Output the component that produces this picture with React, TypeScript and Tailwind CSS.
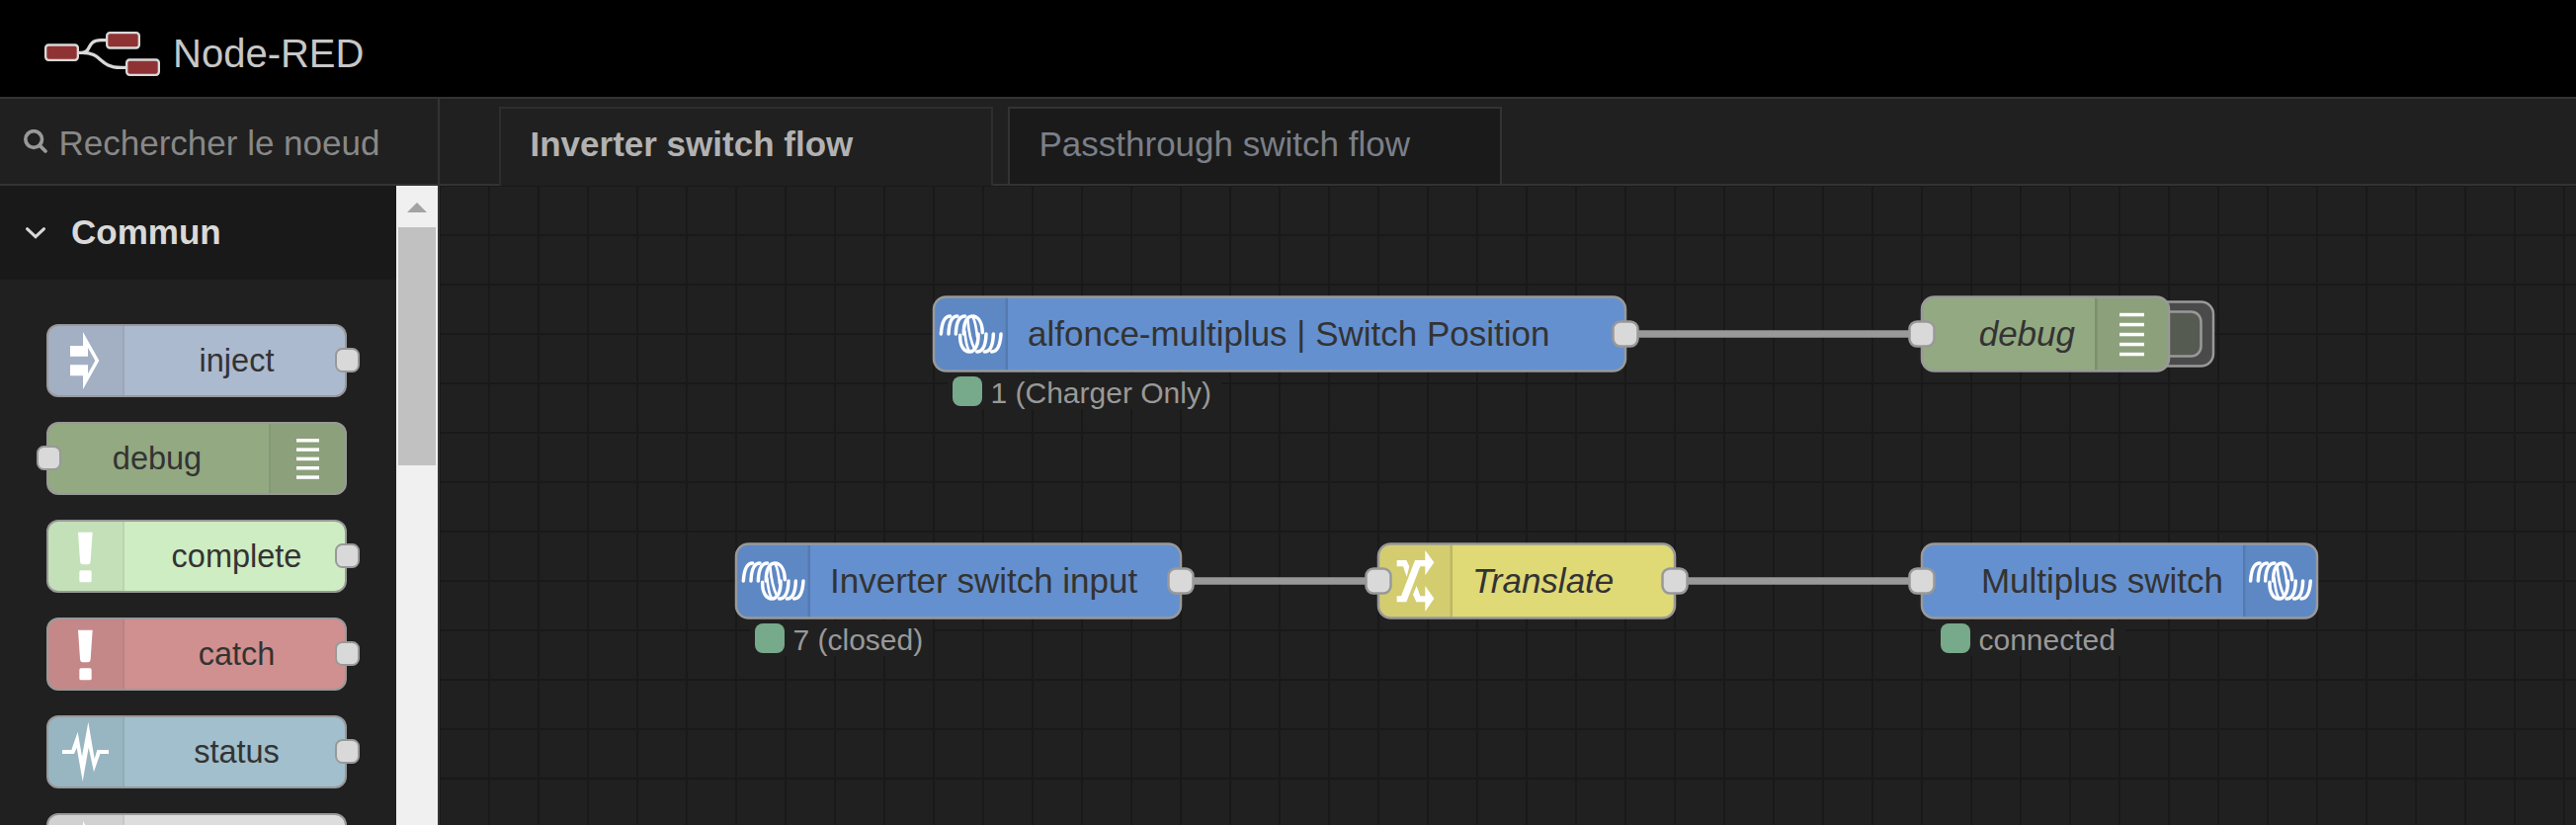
import React from "react";

const NODE_STROKE = "#999999";

/* ---------- glyphs ---------- */

function Logo() {
  return (
    <svg className="h-[46px] w-[118px] shrink-0" viewBox="135 96 354 138" fill="none">
      <path d="M238 160 H250 C278 160 262 122 306 122 H324" stroke="#d9d9d9" strokeWidth="10" />
      <path d="M250 160 C312 160 300 205 366 205 H384" stroke="#d9d9d9" strokeWidth="10" />
      <g fill="#8f3233" stroke="#d9d9d9" strokeWidth="7">
        <rect x="138.500" y="136.500" width="98" height="46" rx="9" />
        <rect x="324.500" y="99.500" width="98" height="46" rx="9" />
        <rect x="384.500" y="181.500" width="98" height="46" rx="9" />
      </g>
    </svg>
  );
}

function SearchIcon() {
  return (
    <svg className="h-6 w-6 shrink-0" viewBox="0 0 72 72" fill="none" stroke="#999999">
      <circle cx="30.5" cy="30" r="25" strokeWidth="11" />
      <path d="M49 49 L66 66" strokeWidth="11" strokeLinecap="round" />
    </svg>
  );
}

function ChevronDown() {
  return (
    <svg className="h-3 w-5 shrink-0" viewBox="0 0 60 36" fill="none">
      <path d="M4.500 5 L30 29 L55.500 5" stroke="#d9d9d9" strokeWidth="9" strokeLinecap="round" />
    </svg>
  );
}

/* Palette glyphs share a 75x70 box, drawn in thirds of a pixel. */
function PaletteGlyph({ kind }: { kind: string }) {
  return (
    <svg className="h-[70px] w-[75px]" viewBox="0 0 225 210" fill="#fff">
      {kind === "inject" && (
        <path
          fillRule="evenodd"
          d="M66 60 H105 V18 L154 105 L105 192 V151 H66 V118 H105 H120 V145 L142 105 L120 66 V92 H66 Z"
        />
      )}
      {kind === "debug" && (
        <g>
          {[45, 73, 101, 129, 157].map((y) => (
            <rect key={y} x="78" y={y} width="69" height="10.500" />
          ))}
        </g>
      )}
      {kind === "alert" && (
        <g>
          <path d="M90 32 H134 L128 120 Q127 130 120 130 H104 Q97 130 96 120 Z" />
          <rect x="94" y="148" width="37" height="36" rx="5" />
        </g>
      )}
      {kind === "status" && (
        <path d="M42 99 H70 L89 44 L102 119 L121 14 L140 126 L148 99 H183 V111 H157 L138 166 L122 92 L104 195 L86 92 L78 111 H42 Z" />
      )}
      {kind === "link" && <path d="M105 18 L154 105 L105 192 Z" />}
    </svg>
  );
}

function Coil() {
  return (
    <g fill="none" stroke="#fff" strokeWidth="10.500" strokeLinecap="round">
      <path d="M22 84 C24 52 32 30 50 30" />
      <path d="M45 84 C46 52 55 30 72 30" />
      <path d="M67 84 C68 52 77 30 95 30" />
      <path d="M91 84 C90 52 100 30 117 30 C137 30 147 52 148 80" />
      <path d="M103 40 C106 76 112 106 124 130" strokeWidth="8" />
      <path d="M118 32 C126 42 130 74 132 92" strokeWidth="8" />
      <path d="M108 136 C100 126 96 96 94 76" strokeWidth="8" />
      <path d="M204 84 C202 116 194 138 176 138" />
      <path d="M181 84 C180 116 171 138 154 138" />
      <path d="M159 84 C158 116 149 138 131 138" />
      <path d="M135 84 C136 116 126 138 109 138 C89 138 79 116 80 88" />
    </g>
  );
}

function Shuffle() {
  return (
    <g fill="#fff">
      <path d="M101 57 H130 L139 76 L131 107 L120 76 H101 Z" />
      <path d="M101 184 V166 H114 L142 94 L156 57 H187 V27 L214 64 L187 103 V76 H172 L130 184 Z" />
      <path d="M161 135 L172 166 H187 V135 L214 173 L187 213 V184 H160 L150 161 Z" />
    </g>
  );
}

/* ---------- palette ---------- */

type PaletteItem = {
  label?: string;
  fill: string;
  glyph: string;
  side: "left" | "right";
};

const PALETTE: PaletteItem[] = [
  { label: "inject", fill: "bg-[#acbacf]", glyph: "inject", side: "left" },
  { label: "debug", fill: "bg-[#93a982]", glyph: "debug", side: "right" },
  { label: "complete", fill: "bg-[#ceedc2]", glyph: "alert", side: "left" },
  { label: "catch", fill: "bg-[#d09090]", glyph: "alert", side: "left" },
  { label: "status", fill: "bg-[#a1bfcd]", glyph: "status", side: "left" },
  { fill: "bg-[#dddddd]", glyph: "link", side: "left" },
];

function PaletteNode({ label, fill, glyph, side }: PaletteItem) {
  const left = side === "left";
  return (
    <div
      className={`relative flex h-[74px] w-[304px] shrink-0 rounded-[12px] border-2 border-[#999] ${fill} ${
        left ? "flex-row" : "flex-row-reverse"
      }`}
    >
      <div
        className={`flex w-[77px] shrink-0 items-center bg-black/5 ${
          left ? "rounded-l-[10px] border-r-2" : "rounded-r-[10px] border-l-2"
        } border-black/5`}
      >
        <PaletteGlyph kind={glyph} />
      </div>
      <div
        className={`flex flex-1 items-center justify-center text-[32.5px] leading-none text-[#333] ${
          left ? "pl-1" : "pr-[3px]"
        }`}
      >
        {label}
      </div>
      <div
        className={`absolute top-[22px] h-[25px] w-[25px] rounded-[7.5px] border-2 border-[#999] bg-[#d9d9d9] ${
          left ? "-right-[15px]" : "-left-3"
        }`}
      />
    </div>
  );
}

function Palette() {
  return (
    <aside className="flex w-[445px] shrink-0 flex-col border-r-2 border-[#333]">
      <div className="flex h-[88px] shrink-0 items-center border-b-2 border-[#333] pl-6">
        <SearchIcon />
        <span className="ml-[11.5px] mt-[3px] whitespace-nowrap text-[35px] leading-none text-[#888]">
          Rechercher le noeud
        </span>
      </div>
      <div className="flex min-h-0 flex-1">
        <div className="flex flex-1 flex-col overflow-hidden">
          <div className="flex h-[95px] shrink-0 items-center bg-[#191919] pl-[26px]">
            <ChevronDown />
            <span className="-mt-[3px] ml-[26px] text-[35px] leading-none font-bold text-[#d9d9d9]">
              Commun
            </span>
          </div>
          <div className="flex flex-col gap-[25px] pt-[45px] pl-[47px]">
            {PALETTE.map((p, i) => (
              <PaletteNode key={i} {...p} />
            ))}
          </div>
        </div>
        <div className="flex w-[42px] shrink-0 flex-col items-center bg-[#f0f0f0]">
          <div className="flex h-[42px] items-center justify-center pt-[2px]">
            <svg className="h-[10px] w-5" viewBox="0 0 20 10">
              <path d="M0 10 L10 0 L20 10 Z" fill="#a3a3a3" />
            </svg>
          </div>
          <div className="h-[241px] w-[38px] bg-[#c1c1c1]" />
        </div>
      </div>
    </aside>
  );
}

/* ---------- canvas ---------- */

type FlowNodeProps = {
  x: number;
  cy: number;
  w: number;
  label: string;
  fill: string;
  icon: "coil" | "shuffle" | "lines";
  iconSide: "left" | "right";
  italic?: boolean;
  input?: boolean;
  output?: boolean;
  button?: boolean;
  status?: string;
};

const FLOW: FlowNodeProps[] = [
  { x: 500, cy: 150, w: 700, label: "alfonce-multiplus | Switch Position", fill: "#6490cf", icon: "coil", iconSide: "left", output: true, status: "1 (Charger Only)" },
  { x: 1500, cy: 150, w: 250, label: "debug", fill: "#93a982", icon: "lines", iconSide: "right", italic: true, input: true, button: true },
  { x: 300, cy: 400, w: 450, label: "Inverter switch input", fill: "#6490cf", icon: "coil", iconSide: "left", output: true, status: "7 (closed)" },
  { x: 950, cy: 400, w: 300, label: "Translate", fill: "#dfd976", icon: "shuffle", iconSide: "left", italic: true, input: true, output: true },
  { x: 1500, cy: 400, w: 400, label: "Multiplus switch", fill: "#6490cf", icon: "coil", iconSide: "right", input: true, status: "connected" },
];

function Port({ x }: { x: number }) {
  return (
    <rect x={x - 12.5} y="25.5" width="25" height="25" rx="7.5" fill="#d9d9d9" stroke={NODE_STROKE} strokeWidth="2.5" />
  );
}

function FlowNode(n: FlowNodeProps) {
  const left = n.iconSide === "left";
  const ix = left ? 0 : n.w - 75;
  const shade = left
    ? "M75 .5 H12.500 A12.500 12.500 0 0 0 0 13 V63 A12.500 12.500 0 0 0 12.500 75.500 H75 Z"
    : "M0 .5 H62.500 A12.500 12.500 0 0 1 75 13 V63 A12.500 12.500 0 0 1 62.500 75.500 H0 Z";
  return (
    <div className="absolute h-[76px]" style={{ left: n.x, top: n.cy - 38, width: n.w }}>
      <svg className="absolute inset-0 h-full w-full overflow-visible">
        {n.button && (
          <g stroke={NODE_STROKE} strokeWidth="2.5">
            <rect x={n.w - 35} y="5.5" width="80" height="65" rx="12.5" fill="#4a4a4a" />
            <rect x={n.w - 12} y="15.5" width="44.5" height="45" rx="10" fill="#565b52" />
          </g>
        )}
        <rect x="0" y=".5" width={n.w} height="75" rx="12.5" fill={n.fill} />
        <path transform={`translate(${ix} 0)`} d={shade} fill="#000" fillOpacity=".05" />
        <rect x={left ? 72.5 : ix} y="1.5" width="2.5" height="73" fill="#000" fillOpacity=".1" />
        <rect x="0" y=".5" width={n.w} height="75" rx="12.5" fill="none" stroke={NODE_STROKE} strokeWidth="2.5" />
        {n.icon === "coil" && (
          <g transform={`translate(${left ? 0 : ix + 0.3} 10) scale(.33333)`}>
            <Coil />
          </g>
        )}
        {n.icon === "shuffle" && (
          <g transform="translate(-15 -2) scale(.33333)">
            <Shuffle />
          </g>
        )}
        {n.icon === "lines" &&
          [16.8, 26.8, 36.8, 46.8, 56.8].map((y) => (
            <rect key={y} x={n.w - 50} y={y} width="25" height="3.5" fill="#fff" />
          ))}
        {n.input && <Port x={0} />}
        {n.output && <Port x={n.w} />}
      </svg>
      <div
        className={`relative flex h-[74px] items-center whitespace-nowrap text-[35px] leading-none text-[#333] ${
          left ? "justify-start pl-[95px]" : "justify-end pr-[95px]"
        } ${n.italic ? "italic" : ""}`}
      >
        {n.label}
      </div>
      {n.status && (
        <div className="absolute top-[78px] left-3.5 flex h-9 items-center bg-[#202020] pr-[10px] pl-[5px]">
          <div className="h-[30px] w-[30px] rounded-[8px] bg-[#77a98b]" />
          <span className="mt-[3px] ml-[8.5px] whitespace-nowrap text-[30px] leading-none text-[#999]">{n.status}</span>
        </div>
      )}
    </div>
  );
}

function Workspace() {
  return (
    <main className="flex min-w-0 flex-1 flex-col">
      <div className="flex h-[88px] shrink-0 items-end">
        <div className="h-full w-[60px] border-b-2 border-[#333]" />
        <div className="flex h-20 w-[500px] items-center border-x-2 border-t-2 border-[#2e2e2e] pl-[29.5px] text-[35px] leading-none font-bold text-[#b2b2b2]">
          <span className="-mt-[7px]">Inverter switch flow</span>
        </div>
        <div className="h-full w-[15px] border-b-2 border-[#333]" />
        <div className="flex h-20 w-[500px] items-center border-2 border-[#333] bg-[#1a1a1a] pl-[29.5px] text-[35px] leading-none text-[#7b7f88]">
          <span className="-mt-[5px]">Passthrough switch flow</span>
        </div>
        <div className="h-full flex-1 border-b-2 border-[#333]" />
      </div>
      <div className="relative min-h-0 flex-1 overflow-hidden bg-[#202020] bg-[linear-gradient(#191919_2px,transparent_2px),linear-gradient(90deg,#191919_2px,transparent_2px)] bg-[size:50px_50px] bg-[position:-1px_-1px]">
        <svg className="absolute inset-0 h-full w-full" stroke={NODE_STROKE} strokeWidth="7.5">
          <path d="M1200 150 H1500" />
          <path d="M750 400 H950" />
          <path d="M1250 400 H1500" />
        </svg>
        {FLOW.map((n) => (
          <FlowNode key={n.label} {...n} />
        ))}
      </div>
    </main>
  );
}

export default function App() {
  return (
    <div className="flex h-[835px] w-full flex-col overflow-hidden bg-[#202020] font-['Liberation_Sans',Arial,sans-serif]">
      <header className="flex h-[100px] shrink-0 items-center border-b-2 border-[#333] bg-black pl-[45px]">
        <div className="flex items-center pt-[11px]">
          <Logo />
          <span className="-mt-px ml-[12px] text-[40px] leading-none text-[#c7c7c7]">Node-RED</span>
        </div>
      </header>
      <div className="flex min-h-0 flex-1">
        <Palette />
        <Workspace />
      </div>
    </div>
  );
}
